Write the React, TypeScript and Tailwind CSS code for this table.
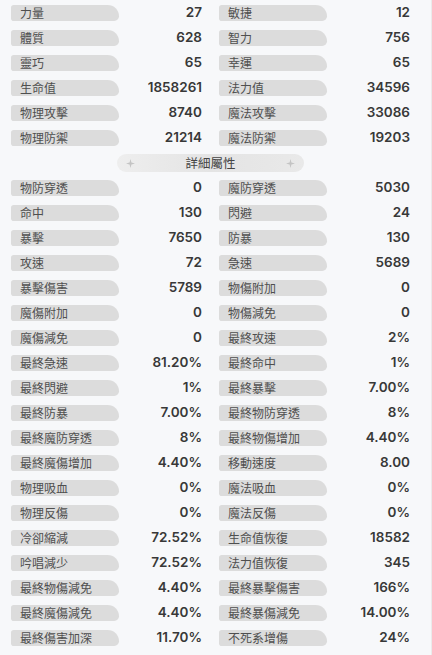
const top: [string, string][] = [
  ['力量', '27'],
  ['敏捷', '12'],
  ['體質', '628'],
  ['智力', '756'],
  ['靈巧', '65'],
  ['幸運', '65'],
  ['生命值', '1858261'],
  ['法力值', '34596'],
  ['物理攻擊', '8740'],
  ['魔法攻擊', '33086'],
  ['物理防禦', '21214'],
  ['魔法防禦', '19203'],
];

const detail: [string, string][] = [
  ['物防穿透', '0'],
  ['魔防穿透', '5030'],
  ['命中', '130'],
  ['閃避', '24'],
  ['暴擊', '7650'],
  ['防暴', '130'],
  ['攻速', '72'],
  ['急速', '5689'],
  ['暴擊傷害', '5789'],
  ['物傷附加', '0'],
  ['魔傷附加', '0'],
  ['物傷減免', '0'],
  ['魔傷減免', '0'],
  ['最終攻速', '2%'],
  ['最終急速', '81.20%'],
  ['最終命中', '1%'],
  ['最終閃避', '1%'],
  ['最終暴擊', '7.00%'],
  ['最終防暴', '7.00%'],
  ['最終物防穿透', '8%'],
  ['最終魔防穿透', '8%'],
  ['最終物傷增加', '4.40%'],
  ['最終魔傷增加', '4.40%'],
  ['移動速度', '8.00'],
  ['物理吸血', '0%'],
  ['魔法吸血', '0%'],
  ['物理反傷', '0%'],
  ['魔法反傷', '0%'],
  ['冷卻縮減', '72.52%'],
  ['生命值恢復', '18582'],
  ['吟唱減少', '72.52%'],
  ['法力值恢復', '345'],
  ['最終物傷減免', '4.40%'],
  ['最終暴擊傷害', '166%'],
  ['最終魔傷減免', '4.40%'],
  ['最終暴傷減免', '14.00%'],
  ['最終傷害加深', '11.70%'],
  ['不死系增傷', '24%'],
  // next row is cut by the bottom edge, only the pill tops show
  ['', ''],
  ['', ''],
];

function Stat({ label, value }: { label: string; value: string }) {
  return (
    <div className="flex h-4 items-center">
      <div className="flex h-4 w-[108px] items-center rounded-l-[3px] rounded-tr-[12px] rounded-br-[5px] bg-[#dcdcdc] pl-[9px] text-[12px] leading-none text-[#4f4f4f] [font-family:'Noto_Sans_CJK_TC',sans-serif]">
        {label}
      </div>
      <div className="flex-1 pr-[17px] text-right text-[13.5px] font-semibold leading-none text-[#383838] [font-family:Inter,'Noto_Sans_CJK_TC',sans-serif]">
        {value}
      </div>
    </div>
  );
}

function Sparkle() {
  return (
    <svg width="9" height="9" viewBox="0 0 10 10" className="text-[#c4c4c4]">
      <path d="M5 0 L6 4 L10 5 L6 6 L5 10 L4 6 L0 5 L4 4 Z" fill="currentColor" />
    </svg>
  );
}

export default function App() {
  return (
    <div className="h-[655px] w-[432px] overflow-hidden border-r border-[#ebebeb] bg-[#f7f8fa]">
      <div className="flex flex-col gap-[9px] pl-[11px] pt-[5px]">
        <div className="grid grid-cols-[208px_208px] gap-y-[9px]">
          {top.map(([l, v]) => (
            <Stat key={l} label={l} value={v} />
          ))}
        </div>

        <div className="flex h-4 w-[399px] items-center justify-center">
          <div className="flex h-[18px] w-[187px] items-center justify-between rounded-full bg-gradient-to-r from-[#eeeeee] via-[#e4e4e4] to-[#e9e9e9] px-[9px]">
            <Sparkle />
            <span className="text-[12.5px] leading-none text-[#444] [font-family:'Noto_Sans_CJK_TC',sans-serif]">
              詳細屬性
            </span>
            <Sparkle />
          </div>
        </div>

        <div className="grid grid-cols-[208px_208px] gap-y-[9px]">
          {detail.map(([l, v], i) => (
            <Stat key={i} label={l} value={v} />
          ))}
        </div>
      </div>
    </div>
  );
}
